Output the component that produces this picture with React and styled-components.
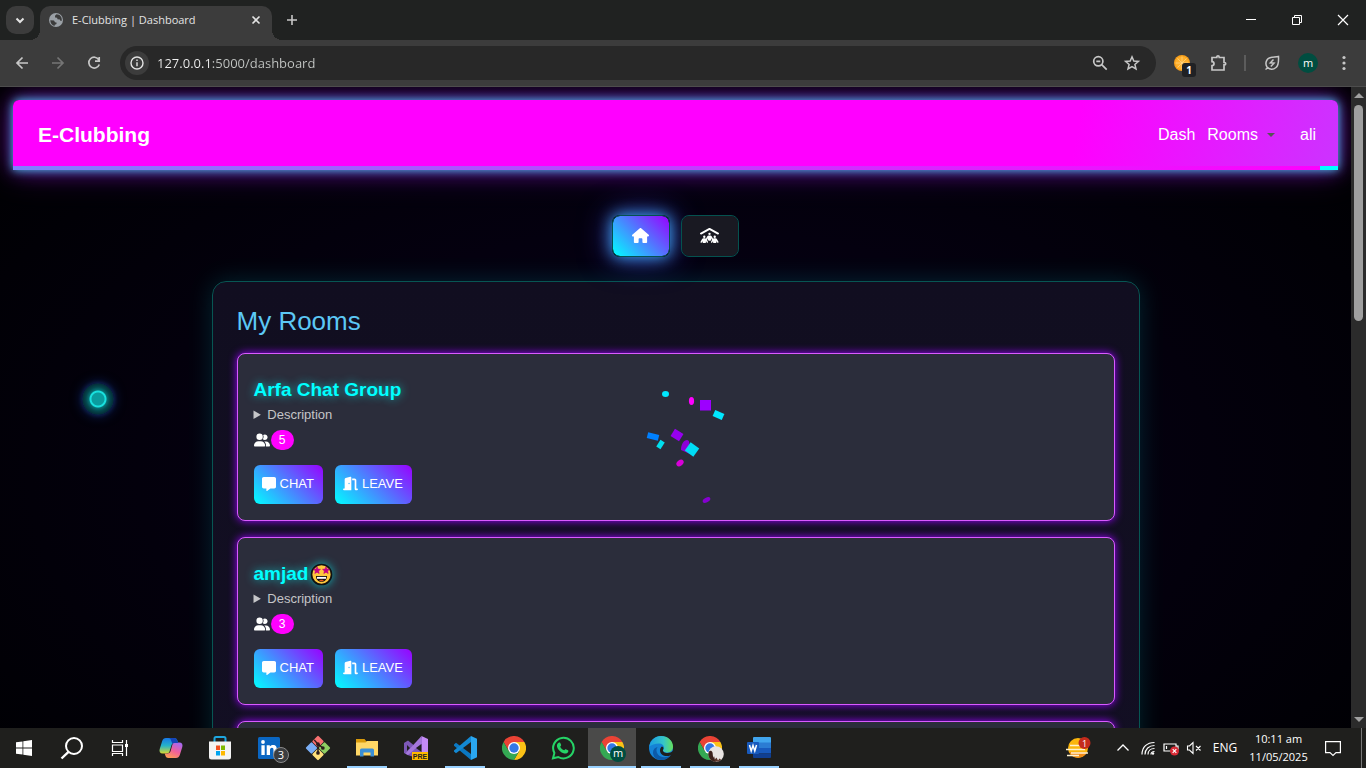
import React from "react";
import styled, { createGlobalStyle, css } from "styled-components";
import { FaHouse, FaPeopleRoof, FaUserGroup, FaMessage, FaDoorOpen } from "react-icons/fa6";

const GlobalStyle = createGlobalStyle`
  *, *::before, *::after { box-sizing: border-box; }
  body { margin: 0; background: #000; font-family: "Liberation Sans", Arial, sans-serif; }
  button, input { font: inherit; }
  h1, h2 { margin: 0; }
`;

const chromeFont = css`font-family: "Open Sans", "Noto Sans", sans-serif;`;

const Screen = styled.div`
  display: flex;
  flex-direction: column;
  height: 100vh;
  overflow: hidden;
`;

/* ---------- browser frame ---------- */

const TabStrip = styled.div`
  ${chromeFont}
  display: flex;
  flex: none;
  height: 40px;
  background: #202221;
`;

const IconButton = styled.button`
  display: flex;
  align-items: center;
  justify-content: center;
  flex: none;
  width: ${(p) => p.$w || 28}px;
  height: ${(p) => p.$h || 28}px;
  padding: 0;
  border: 0;
  border-radius: ${(p) => p.$radius || 0}px;
  background: ${(p) => p.$bg || "transparent"};
  color: ${(p) => p.$color || "#c7c7c7"};
  svg { display: block; overflow: visible; }
`;

const TabSearch = styled(IconButton)`
  margin: 6px 6px 0;
`;

const Tab = styled.div`
  position: relative;
  display: flex;
  align-items: center;
  width: 232px;
  height: 34px;
  margin-top: 6px;
  padding: 0 2px 6px 8px;
  border-radius: 10px 10px 0 0;
  background: #3c3c3c;
  color: #e3e3e3;
  font-size: 11px;
  line-height: 16px;
  &::before, &::after {
    content: "";
    position: absolute;
    bottom: 0;
    width: 10px;
    height: 10px;
  }
  &::before { left: -10px; background: radial-gradient(circle at 0 0, transparent 10px, #3c3c3c 10px); }
  &::after { right: -10px; background: radial-gradient(circle at 100% 0, transparent 10px, #3c3c3c 10px); }
`;

const TabTitle = styled.span`
  flex: 1;
  margin-left: 8px;
  white-space: nowrap;
`;

const NewTab = styled(IconButton)`
  margin: 6px auto 0 6px;
`;

const Toolbar = styled.div`
  ${chromeFont}
  display: flex;
  align-items: center;
  flex: none;
  gap: 8px;
  height: 47px;
  padding: 0 8px;
  border-bottom: 1px solid #4d4d4d;
  background: #3c3c3c;
`;

const AddressBar = styled.label`
  display: flex;
  align-items: center;
  flex: 1;
  height: 34px;
  margin: 0 4px;
  padding: 0 6px 0 5px;
  border-radius: 17px;
  background: #282828;
`;

const AddressInput = styled.input`
  flex: 1;
  min-width: 0;
  height: 24px;
  margin-left: 8px;
  padding: 0;
  border: 0;
  outline: 0;
  font-size: 13px;
  background: linear-gradient(90deg, #f1f1f1 54px, #c4c7c5 54px);
  background-clip: text;
  -webkit-text-fill-color: transparent;
`;

const ToolbarRule = styled.span`
  width: 2px;
  height: 16px;
  margin: 0 4px;
  background: #5c5c5c;
`;

const Avatar = styled.span`
  display: grid;
  place-items: center;
  width: 20px;
  height: 20px;
  border-radius: 50%;
  background: #004d40;
  color: #fff;
  font-size: 11px;
  line-height: 16px;
`;

const ExtensionBadge = styled.span`
  position: absolute;
  right: 0;
  bottom: 0;
  width: 14px;
  height: 14px;
  border-radius: 3px;
  background: #202124;
  color: #fff;
  font: bold 10px/14px "Open Sans", sans-serif;
`;

const ExtensionButton = styled(IconButton)`
  position: relative;
`;

/* ---------- web page ---------- */

const Viewport = styled.div`
  display: flex;
  flex: 1;
  min-height: 0;
`;

const Page = styled.div`
  position: relative;
  flex: 1;
  min-width: 0;
  overflow: hidden;
  background: radial-gradient(ellipse at 50% 60%, #06001a 0%, #04000f 45%, #000003 90%);
`;

const NavBar = styled.header`
  margin: 13px 13px 0;
  border-radius: 6px 6px 0 0;
  box-shadow: 0 0 10px #4cc9f0, 0 0 20px rgba(120, 40, 220, 0.6), 0 0 34px rgba(200, 0, 255, 0.35);
  color: #fff;
`;

const NavRow = styled.div`
  display: flex;
  align-items: center;
  height: 66px;
  padding: 0 22px 0 25px;
  border-radius: 6px 6px 0 0;
  background: linear-gradient(100deg, #ff00ff 80%, #cc33ff 100%);
`;

const Brand = styled.a`
  margin: 4px auto 0 0;
  color: #fff;
  font-size: 21px;
  font-weight: bold;
  line-height: 28px;
  text-decoration: none;
`;

const NavLinks = styled.nav`
  display: flex;
  align-items: center;
  gap: 12px;
  margin-top: 4px;
`;

const NavLink = styled.a`
  display: flex;
  align-items: center;
  gap: 9px;
  color: #fff;
  font-size: 16px;
  line-height: 24px;
  text-decoration: none;
`;

const Caret = styled.span`
  margin-right: 13px;
  border: 4px solid transparent;
  border-bottom: 0;
  border-top-color: #555;
`;

const NavProgress = styled.div`
  height: 4px;
  background: linear-gradient(90deg, #8080ff, #ff00ff calc(100% - 18px), #00ffff 0);
`;

const Switcher = styled.div`
  display: flex;
  justify-content: center;
  gap: 11px;
  margin: 45px 0 24px;
`;

const SwitchButton = styled.button`
  display: grid;
  place-items: center;
  width: 58px;
  height: 42px;
  padding: 0 2px 2px 0;
  border: 1px solid #04524f;
  border-radius: 8px;
  background: ${(p) => (p.$active ? "linear-gradient(45deg, #00ffff, #9900ff)" : "#191922")};
  background-clip: padding-box;
  box-shadow: ${(p) => (p.$active ? "0 0 16px #3fb4ff, 0 0 32px rgba(70, 60, 230, 0.7)" : "none")};
  color: #fff;
`;

const Panel = styled.main`
  max-width: 928px;
  margin: 0 auto;
  padding: 24px;
  border: 1px solid #075653;
  border-radius: 14px;
  background: linear-gradient(180deg, #110e20, #130f24);
  box-shadow: 0 0 24px rgba(0, 255, 255, 0.15);
`;

const PanelTitle = styled.h1`
  margin-bottom: 17px;
  color: #5cc8f5;
  font-size: 26px;
  font-weight: normal;
  line-height: 30px;
`;

const RoomList = styled.div`
  display: flex;
  flex-direction: column;
  gap: 16px;
`;

const RoomCard = styled.article`
  min-height: 168px;
  padding: 25px 16px 16px;
  border: 1px solid #d95bff;
  border-radius: 8px;
  background: #2b2d3b;
  box-shadow: 0 0 9px #9900ff;
`;

const RoomName = styled.h2`
  display: flex;
  align-items: center;
  gap: 2px;
  height: 22px;
  color: #00ffff;
  font-size: 19px;
  line-height: 22px;
  text-shadow: 0 0 10px rgba(0, 255, 255, 0.65);
  svg { filter: drop-shadow(0 0 5px rgba(0, 255, 255, 0.65)); }
`;

const Description = styled.details`
  margin: 4px 0 5px;
  color: #c5c5c8;
  font-size: 13px;
  line-height: 20px;
`;

const Members = styled.div`
  display: flex;
  align-items: center;
  gap: 1px;
  height: 20px;
  color: #fff;
`;

const Count = styled.span`
  width: 23px;
  border-radius: 10px;
  background: #ff00ff;
  font-size: 12px;
  line-height: 20px;
  text-align: center;
`;

const Actions = styled.div`
  display: flex;
  gap: 12px;
  margin-top: 15px;
`;

const ActionButton = styled.button`
  display: flex;
  align-items: center;
  gap: 4px;
  height: 39px;
  padding: 0 9px 2px 8px;
  border: 0;
  border-radius: 6px;
  background: linear-gradient(45deg, #00ffff, #9900ff);
  color: #fff;
  font-size: 13px;
  line-height: 20px;
`;

const Confetti = styled.svg`
  position: absolute;
  top: 283px;
  left: calc(50% - 76px);
  pointer-events: none;
`;

const PointerGlow = styled.span`
  position: absolute;
  top: 296px;
  left: 82px;
  width: 32px;
  height: 32px;
  border-radius: 50%;
  background: radial-gradient(circle, #0a9c9e 0 6px, #19e0de 7px, #19e0de 8px, #077074 9px, #04484e 12px, #04303a 15px, #0a2350 16px);
  box-shadow: 0 0 4px #102a60, 0 0 12px rgba(30, 80, 190, 0.5);
`;

const ScrollTrack = styled.div`
  display: flex;
  flex-direction: column;
  align-items: center;
  flex: none;
  width: 15px;
  padding: 6px 0;
  background: #2b2b2b;
`;

const ScrollArrow = styled.span`
  border: 5px solid transparent;
  ${(p) =>
    p.$down
      ? css`margin-top: auto; border-bottom: 0; border-top-color: #a0a0a0;`
      : css`border-top: 0; border-bottom-color: #a0a0a0;`}
`;

const ScrollThumb = styled.span`
  width: 9px;
  height: 216px;
  margin-top: 7px;
  border-radius: 5px;
  background: #9f9f9f;
`;

/* ---------- taskbar ---------- */

const Taskbar = styled.footer`
  ${chromeFont}
  display: flex;
  flex: none;
  height: 40px;
  background: #1f1f1d;
  color: #fff;
`;

const SystemButtons = styled.div`
  display: flex;
  margin-right: 3px;
`;

const Apps = styled.div`
  display: flex;
  gap: 1px;
`;

const TaskButton = styled.button`
  position: relative;
  display: grid;
  place-items: center;
  width: 48px;
  height: 40px;
  padding: 0;
  border: 0;
  background: ${(p) => (p.$active ? "#4a4a49" : "transparent")};
  svg { display: block; }
  ${(p) =>
    (p.$running || p.$active) &&
    css`
      &::after {
        content: "";
        position: absolute;
        bottom: 0;
        left: ${p.$active ? 0 : 4}px;
        right: ${p.$active ? 0 : 4}px;
        height: 2px;
        background: #99d1ff;
      }
    `}
`;

const TaskBadge = styled.span`
  position: absolute;
  right: ${(p) => p.$right}px;
  bottom: ${(p) => p.$bottom}px;
  width: 16px;
  height: 16px;
  border: ${(p) => (p.$ring ? "1px solid #8a8a8a" : "0")};
  border-radius: 50%;
  background: ${(p) => p.$bg};
  color: #fff;
  font-size: 11px;
  line-height: 14px;
  text-align: center;
`;

const Tray = styled.div`
  display: flex;
  align-items: center;
  margin-left: auto;
  padding-right: 4px;
`;

const TrayButton = styled(IconButton)`
  color: #fff;
`;

const Language = styled.button`
  width: 40px;
  padding: 0;
  border: 0;
  background: transparent;
  color: #fff;
  font-size: 12px;
  line-height: 18px;
`;

const Clock = styled.time`
  width: 67px;
  font-size: 11px;
  line-height: 18px;
  text-align: center;
  white-space: nowrap;
`;

const Notifications = styled(TrayButton)`
  padding-right: 8px;
  border-right: 1px solid #777;
`;

/* ---------- drawings ---------- */

const Line = ({ size = 16, w = 1.7, box = 16, children }) => (
  <svg width={size} height={size} viewBox={`0 0 ${box} ${box}`} fill="none" stroke="currentColor" strokeWidth={w} aria-hidden="true">
    {children}
  </svg>
);

const Globe = () => (
  <svg width="16" height="16" viewBox="0 0 16 16" aria-hidden="true">
    <circle cx="8" cy="8" r="7" fill="#9aa0a6" />
    <path d="M2.300 8.200 6 8.600l1 1.700 1.800.4-.6 1.600-1.500.5-.1 1.200C4 13.200 2.300 11 2.300 8.200zM8.500 2.200 7 3.800l.1 1.700 2 .2.400 1.600 2.300.2.800 1.400 1.200-.2C14.200 5 12 2.300 8.500 2.200z" fill="#3c3c3c" />
  </svg>
);

const Orange = () => (
  <svg width="18" height="18" viewBox="0 0 18 18" aria-hidden="true">
    <circle cx="9" cy="9" r="8" fill="#f9a01b" />
    <circle cx="9" cy="9" r="6.500" fill="#ffb02c" />
    <path d="M9 2.500v13M2.500 9h13M4.400 4.400l9.200 9.200M13.600 4.400l-9.200 9.200" stroke="#ffd88c" strokeWidth=".7" />
  </svg>
);

const StarEyes = () => (
  <svg width="23" height="23" viewBox="0 0 23 23" aria-label="star-struck" role="img">
    <circle cx="11.500" cy="11.500" r="10" fill="#ffc83d" stroke="#111" strokeWidth="1.700" />
    <path d="M7 3.800l1 2.300 2.500.2-1.900 1.700.6 2.500L7 9.200l-2.200 1.300.6-2.500-1.900-1.700L6 6.100zM16 3.800l1 2.300 2.500.2-1.900 1.700.6 2.500-2.200-1.300-2.200 1.300.6-2.500-1.900-1.700 2.500-.2z" fill="#c30083" stroke="#c30083" strokeWidth=".6" />
    <path d="M6 13h11c0 3.600-2.300 5.800-5.500 5.800S6 16.600 6 13z" fill="#111" />
    <path d="M7 13.900h9v1.900H7z" fill="#fff" />
    <path d="M9 17.600c1-1 4-1 5 0-1.200.8-3.800.8-5 0z" fill="#e8541e" />
  </svg>
);

const ChromeLogo = () => (
  <svg width="24" height="24" viewBox="0 0 24 24" aria-hidden="true">
    <path d="M17.200 15 12 24A12 12 0 0 0 22.400 6H12z" fill="#fbc116" />
    <path d="M1.600 6A12 12 0 0 1 22.400 6H12l-5.200 9z" fill="#ea4335" />
    <path d="M1.600 6 6.800 15 12 18l5.200-3L12 24A12 12 0 0 1 1.600 6z" fill="#34a853" />
    <circle cx="12" cy="12" r="6" fill="#fff" />
    <circle cx="12" cy="12" r="4.700" fill="#3478e5" />
  </svg>
);

const Windows = () => (
  <svg width="16" height="16" viewBox="0 0 16 16" fill="#fff" aria-hidden="true">
    <path d="M0 2.300 6.500 1.400v6.200H0zM7.300 1.300 16 0v7.600H7.300zM0 8.400h6.500v6.200L0 13.700zM7.300 8.400H16V16l-8.700-1.300z" />
  </svg>
);

const Search = () => (
  <svg width="24" height="24" viewBox="0 0 24 24" fill="none" stroke="#fff" strokeWidth="2" aria-hidden="true">
    <circle cx="14" cy="10" r="8" />
    <path d="M8.500 15.800 1.500 22.500" strokeWidth="2.400" />
  </svg>
);

const TaskView = () => (
  <svg width="18" height="18" viewBox="0 0 18 18" fill="none" stroke="#fff" strokeWidth="1.200" aria-hidden="true">
    <path d="M1.500 1v2.500h10V1M1.500 17v-2.500h10V17M1.500 6h10v6.500h-10zM15.500 1v16" />
    <path d="M14 5h3v3h-3z" fill="#fff" stroke="none" />
  </svg>
);

const Copilot = () => (
  <svg width="24" height="22" viewBox="0 0 24 22" aria-hidden="true">
    <defs>
      <linearGradient id="cpA" x1="0" y1="0" x2="0" y2="1">
        <stop offset="0" stopColor="#1778e8" /><stop offset=".5" stopColor="#26b4c8" /><stop offset="1" stopColor="#d8d930" />
      </linearGradient>
      <linearGradient id="cpB" x1="0.700" y1="0" x2="0.200" y2="1">
        <stop offset="0" stopColor="#a768f0" /><stop offset=".5" stopColor="#f0609a" /><stop offset="1" stopColor="#ffa050" />
      </linearGradient>
    </defs>
    <path d="M7 1h8c2 0 3 1.200 3.500 3l.6 2h-3.600c-2 0-2.700 1-3.200 2.700L10.700 14c-.6 1.800-1.500 2.500-3.200 2.500H3.700C1 16.500 0 14.500.7 12L3.200 4C3.900 2 5 1 7 1z" fill="url(#cpA)" />
    <path d="M17 21H9.500c-2 0-2.800-1.200-3.300-3l-.5-1.600h2.500c2 0 3-1 3.500-2.700L13.300 8c.6-1.800 1.500-2.500 3.200-2.500h3.800c2.700 0 3.700 2 3 4.500L20.800 18c-.7 2-1.800 3-3.800 3z" fill="url(#cpB)" />
    <path d="M15 1c2 0 3 1.200 3.500 3l.6 2h-3.600c-1 0-1.700.3-2.200.8L12 3.200C11.700 2 11 1 9.500 1z" fill="#1545b8" />
  </svg>
);

const Store = () => (
  <svg width="24" height="24" viewBox="0 0 24 24" aria-hidden="true">
    <path d="M6.500 6V2.500Q6.500 1 8 1h8q1.500 0 1.500 1.500V6" fill="none" stroke="#1ea7e0" strokeWidth="2" />
    <path d="M1 5.500h22V21q0 2.500-2.500 2.500h-17Q1 23.500 1 21z" fill="#f4f4f4" />
    <path d="M8 9.500h4V14H8z" fill="#f25022" /><path d="M13 9.500h4V14h-4z" fill="#7fba00" />
    <path d="M8 15h4v4.500H8z" fill="#00a4ef" /><path d="M13 15h4v4.500h-4z" fill="#ffb900" />
  </svg>
);

const LinkedIn = () => (
  <svg width="22" height="22" viewBox="0 0 22 22" aria-hidden="true">
    <rect width="22" height="22" rx="1.500" fill="#0a66c2" />
    <g fill="#fff">
      <circle cx="5" cy="5" r="1.900" />
      <path d="M3.400 8.300h3.300V18H3.400zM8.700 8.300h3.100v1.300c.6-1 1.700-1.600 3.200-1.600 3 0 3.800 1.800 3.800 4.700V18h-3.300v-4.700c0-1.300-.2-2.500-1.600-2.500S12 12 12 13.200V18H8.700z" />
    </g>
  </svg>
);

const Git = () => (
  <svg width="26" height="26" viewBox="0 0 24 24" aria-hidden="true">
    <g transform="rotate(45 12 12)">
      <rect x="3.800" y="3.800" width="7.900" height="7.900" rx="1" fill="#f87171" />
      <rect x="12.300" y="3.800" width="7.900" height="7.900" rx="1" fill="#8fce62" />
      <rect x="3.800" y="12.300" width="7.900" height="7.900" rx="1" fill="#7aaef5" />
      <rect x="12.300" y="12.300" width="7.900" height="7.900" rx="1" fill="#ffe07a" />
    </g>
    <path d="M8.500 4.500 12 8.500v8M12 8.500l4.500 3.500" stroke="#2b1d1a" strokeWidth="1.400" fill="none" />
    <g fill="#2b1d1a"><circle cx="12" cy="8.500" r="1.700" /><circle cx="16.500" cy="12" r="1.700" /><circle cx="12" cy="16.500" r="1.700" /></g>
  </svg>
);

const Explorer = () => (
  <svg width="22" height="20" viewBox="0 0 22 20" aria-hidden="true">
    <path d="M0 1h8.500l2 2.500H22V17H0z" fill="#d99a0b" />
    <path d="M0 4.500h9.500L11 3h11v14.500H0z" fill="#ffd766" />
    <path d="M4 18.500V12q0-1.500 1.500-1.500h11Q18 10.500 18 12v6.500h-3.500v-4h-7v4z" fill="#3b8fd6" />
  </svg>
);

const VisualStudio = () => (
  <svg width="24" height="24" viewBox="0 0 24 24" aria-hidden="true">
    <path d="M1.500 6 4 4.500l8 6.500 5.500-9.500L24 4v16.500l-6.500 3L3.500 19 0 17V7z" fill="#7d58b8" />
    <path d="M17.500 0 24 3v18l-6.500 3z" fill="#c48af5" />
    <path d="M17.500 0v7.500L4 19l-2.500-1.500z" fill="#a477db" />
    <path d="M3 9v6l3-3z" fill="#1f1f1d" /><path d="m12 12 5.500-4v8z" fill="#1f1f1d" />
    <rect x="8" y="16" width="16" height="8" fill="#ffb900" />
    <text x="16" y="22.700" textAnchor="middle" fontFamily="Liberation Sans, sans-serif" fontWeight="bold" fontSize="7" fill="#222">PRE</text>
  </svg>
);

const VSCode = () => (
  <svg width="24" height="24" viewBox="0 0 24 24" aria-hidden="true">
    <path d="m1 8.500 2-1.700L18 18v6L1 9.700z" fill="#0b78c2" />
    <path d="M18 0v6L3 17.300l-2-1.700v-1.200z" fill="#1389d3" />
    <path d="M18 0l6 2.800v18.400L18 24z" fill="#2aa7f0" />
  </svg>
);

const WhatsApp = () => (
  <svg width="24" height="24" viewBox="0 0 24 24" aria-hidden="true">
    <path d="M2 22.300 3.400 17A10.300 10.300 0 1 1 7.300 21z" fill="none" stroke="#25d366" strokeWidth="2" />
    <path d="M8 6.500c.5-.2 1-.2 1.300.4l.8 1.900c.2.500 0 .8-.9 1.900.9 1.700 2.200 2.800 4 3.600.8-.9 1-1.300 1.600-1.100l2.200 1c.5.3.4 1.400 0 2-.8 1.200-2.300 1.600-3.800 1.200-3.700-1-6.300-3.700-7.200-6.700-.3-1.500.3-3.500 2-4.200z" fill="#25d366" />
  </svg>
);

const Edge = () => (
  <svg width="24" height="24" viewBox="0 0 24 24" aria-hidden="true">
    <defs>
      <linearGradient id="edgeTop" x1="0" y1="0.500" x2="1" y2="0.500">
        <stop offset="0" stopColor="#1b9de2" /><stop offset=".6" stopColor="#35c5c8" /><stop offset="1" stopColor="#66e05a" />
      </linearGradient>
    </defs>
    <circle cx="12" cy="12" r="12" fill="#1583d6" />
    <path d="M.3 10.500C1.300 4.300 6 0 12 0c7 0 12 5 12 10.500 0 4-3 6-6 6-2.500 0-4-1-4-2s1-1.500 1-3c0-2-2-4-5-4-4 0-8 1.500-9.700 3z" fill="url(#edgeTop)" />
    <path d="M8.500 11c-1.500 2-1.500 5 .5 7.500 3 3.500 8.500 3.500 13 .5-2 3-6 5-10 5-5 0-8-3.500-8-7.500 0-3 2-5 4.500-5.500z" fill="#0c5aa8" />
    <path d="M13 10.500c1.500.5 2 1.500 1 3.500-.6 1.500 1.500 3 4.500 3 2 0 4-.8 5.500-2v3l-2.300 1.200c-5 2.300-10.700-.2-10.700-4.700 0-2 1-3.500 2-4z" fill="#1f1f1d" />
  </svg>
);

const ProfilePhoto = () => (
  <svg width="16" height="16" viewBox="0 0 16 16" aria-hidden="true">
    <circle cx="8" cy="8" r="7.800" fill="#e8e4e2" />
    <path d="M1 5.500C2 4 4 4.500 4.500 6.500c.5 2 0 3 1 4.500s1.500 3 2.500 4.800C4 16 .5 13 .2 8z" fill="#3c211b" />
    <path d="m6 10 1.500 3 1-1.500 1.500 3 1.500-2 1.500 1-2 2H7z" fill="#5a3329" />
  </svg>
);

const Word = () => (
  <svg width="24" height="22" viewBox="0 0 24 22" aria-hidden="true">
    <path d="M6 1q0-1 1-1h16q1 0 1 1v5H6z" fill="#41a5ee" /><path d="M6 5.500h18V11H6z" fill="#2b7cd3" />
    <path d="M6 11h18v5.500H6z" fill="#185abd" /><path d="M6 16.500h18V20q0 1-1 1H7q-1 0-1-1z" fill="#103f91" />
    <rect y="5" width="12" height="12" rx="1" fill="#185abd" />
    <path d="m2.500 8 1.700 6L6 8.500 7.800 14l1.700-6" fill="none" stroke="#fff" strokeWidth="1.500" />
  </svg>
);

const Weather = () => (
  <svg width="25" height="22" viewBox="0 0 25 22" aria-hidden="true">
    <circle cx="12" cy="11" r="10" fill="#fbb60d" />
    <path d="M3 15a10 10 0 0 0 18 0z" fill="#f08a18" />
    <path d="M4 8.500h15M0 12.500h19M5 16h17M1 18.500h12" stroke="#fff2cf" strokeWidth="1.600" />
    <circle cx="18.500" cy="6" r="6" fill="#c42b1c" />
    <text x="18.500" y="9.500" textAnchor="middle" fontFamily="Open Sans, sans-serif" fontSize="9" fill="#fff">1</text>
  </svg>
);

const apps = [
  { name: "Copilot", icon: <Copilot /> },
  { name: "Microsoft Store", icon: <Store /> },
  { name: "LinkedIn", icon: <LinkedIn />, badge: <TaskBadge $right={4} $bottom={5} $bg="#3b3d40" $ring>3</TaskBadge> },
  { name: "Git", icon: <Git /> },
  { name: "File Explorer", icon: <Explorer />, running: true },
  { name: "Visual Studio", icon: <VisualStudio /> },
  { name: "Visual Studio Code", icon: <VSCode />, running: true },
  { name: "Chrome", icon: <ChromeLogo /> },
  { name: "WhatsApp", icon: <WhatsApp /> },
  { name: "Chrome, m", icon: <ChromeLogo />, active: true, badge: <TaskBadge $right={10} $bottom={6} $bg="#004d40">m</TaskBadge> },
  { name: "Edge", icon: <Edge />, running: true },
  { name: "Chrome, second profile", icon: <ChromeLogo />, running: true, badge: <TaskBadge $right={10} $bottom={6} $bg="transparent"><ProfilePhoto /></TaskBadge> },
  { name: "Word", icon: <Word />, running: true },
];

const rooms = [
  { name: "Arfa Chat Group", count: 5 },
  { name: "amjad", emoji: <StarEyes />, count: 3 },
];

function Room({ name, emoji, count }) {
  return (
    <RoomCard>
      <RoomName>{name}{emoji}</RoomName>
      <Description><summary>Description</summary></Description>
      <Members><FaUserGroup size={16} /><Count>{count}</Count></Members>
      <Actions>
        <ActionButton><FaMessage size={14} />CHAT</ActionButton>
        <ActionButton><FaDoorOpen size={15} />LEAVE</ActionButton>
      </Actions>
    </RoomCard>
  );
}

export default function App() {
  return (
    <Screen>
      <GlobalStyle />
      <TabStrip>
        <TabSearch $bg="#3c3c3c" $radius={10} $color="#e3e3e3" aria-label="Search tabs">
          <Line size={10} box={10} w={2}><path d="m1.500 3.500 3.500 3.500 3.500-3.500" /></Line>
        </TabSearch>
        <Tab>
          <Globe />
          <TabTitle>E-Clubbing | Dashboard</TabTitle>
          <IconButton $color="#e3e3e3" aria-label="Close tab">
            <Line size={8} box={8} w={1.6}><path d="m.5.5 7 7m0-7-7 7" /></Line>
          </IconButton>
        </Tab>
        <NewTab aria-label="New tab"><Line size={10} box={10} w={1.6}><path d="M5 0v10M0 5h10" /></Line></NewTab>
        <IconButton $w={46} $h={40} $color="#fff" aria-label="Minimize"><Line size={10} box={10} w={1}><path d="M0 4.500h10" /></Line></IconButton>
        <IconButton $w={46} $h={40} $color="#fff" aria-label="Restore"><Line size={10} box={10} w={1}><path d="M.5 2.500h7v7h-7zM2.500 2.500v-2h7v7h-2" /></Line></IconButton>
        <IconButton $w={46} $h={40} $color="#fff" aria-label="Close"><Line size={10} box={10} w={1.2}><path d="m0 0 10 10M10 0 0 10" /></Line></IconButton>
      </TabStrip>

      <Toolbar>
        <IconButton aria-label="Back"><Line><path d="M14 8H3m5.500-5.500L3 8l5.500 5.500" /></Line></IconButton>
        <IconButton $color="#757575" aria-label="Forward"><Line><path d="M2 8h11M7.500 2.500 13 8l-5.500 5.500" /></Line></IconButton>
        <IconButton aria-label="Reload"><Line><path d="M12.800 4.700A5.400 5.400 0 1 0 13.300 9.500M13.200 2v4.200H9" /></Line></IconButton>
        <AddressBar>
          <IconButton as="span" $w={24} $h={24} $radius={12} $bg="#3c3c3c" $color="#e3e3e3">
            <Line size={14} box={14} w={1.4}><circle cx="7" cy="7" r="6" /><path d="M7 6.200v4M7 3.500V5" /></Line>
          </IconButton>
          <AddressInput aria-label="Address" defaultValue="127.0.0.1:5000/dashboard" />
          <IconButton aria-label="Zoom"><Line><circle cx="6.300" cy="6.300" r="4.600" /><path d="m9.700 9.700 5 5M4.300 6.300h4" /></Line></IconButton>
          <IconButton $w={36} aria-label="Bookmark"><Line w={1.5}><path d="m8 1.800 1.800 4.200 4.600.4-3.500 3 1.100 4.500L8 11.500l-4 2.400 1.100-4.500-3.500-3L6.200 6z" /></Line></IconButton>
        </AddressBar>
        <ExtensionButton aria-label="Extension"><Orange /><ExtensionBadge>1</ExtensionBadge></ExtensionButton>
        <IconButton aria-label="Extensions">
          <Line size={18} box={18} w={1.7}><path d="M3 3.500h4.800V3a1.200 1.200 0 0 1 2.400 0v.5H15v5h.5a1.200 1.200 0 0 1 0 2.400H15V16H3v-4.300q2-.2 2-2t-2-2z" /></Line>
        </IconButton>
        <ToolbarRule />
        <IconButton aria-label="Performance">
          <Line w={1.5}><path d="M1.500 14.500 4 12.700M3 12C.8 8.500 2 3 8 2.300 10.500 2 12.500 2 14.500 1.500c.3 5.500-.2 9-2.500 11-2.500 2.200-6 2.300-9-.5z" /><path d="M9.500 4.500 6.300 7.800l3.700.4-3.200 3.300" /></Line>
        </IconButton>
        <IconButton aria-label="Profile"><Avatar>m</Avatar></IconButton>
        <IconButton aria-label="Menu">
          <svg width="4" height="16" viewBox="0 0 4 16" fill="currentColor"><circle cx="2" cy="2.500" r="1.600" /><circle cx="2" cy="8" r="1.600" /><circle cx="2" cy="13.500" r="1.600" /></svg>
        </IconButton>
      </Toolbar>

      <Viewport>
        <Page>
          <NavBar>
            <NavRow>
              <Brand href="#">E-Clubbing</Brand>
              <NavLinks>
                <NavLink href="#">Dash</NavLink>
                <NavLink href="#">Rooms<Caret /></NavLink>
                <NavLink href="#">ali</NavLink>
              </NavLinks>
            </NavRow>
            <NavProgress />
          </NavBar>
          <Switcher>
            <SwitchButton $active aria-label="Home"><FaHouse size={17} /></SwitchButton>
            <SwitchButton aria-label="Rooms"><FaPeopleRoof size={19} /></SwitchButton>
          </Switcher>
          <Panel>
            <PanelTitle>My Rooms</PanelTitle>
            <RoomList>
              {rooms.map((room) => <Room key={room.name} {...room} />)}
              <RoomCard />
            </RoomList>
          </Panel>
          <Confetti width="160" height="150" viewBox="0 0 160 150" aria-hidden="true">
            <ellipse cx="65.500" cy="24" rx="3.500" ry="3" fill="#00e8ff" />
            <ellipse cx="91.500" cy="31" rx="2.600" ry="4" fill="#ff00ff" />
            <rect x="100" y="30" width="11" height="10.500" fill="#9d00ff" />
            <rect x="-5" y="-3.300" width="10" height="6.600" fill="#00e8ff" transform="translate(118.500 45) rotate(24)" />
            <rect x="-5.700" y="-3" width="11.400" height="6" fill="#0080ff" transform="translate(53 66.500) rotate(14)" />
            <rect x="-2.500" y="-4" width="5" height="8" fill="#00dfee" transform="translate(60.500 74.500) rotate(32)" />
            <rect x="-5" y="-4.200" width="10" height="8.400" fill="#9600f0" transform="translate(77 65) rotate(32)" />
            <path d="M81 80c0-6 3-10 6-10 2 0 3 3 2 6l1 8z" fill="#8c00d8" />
            <rect x="-5.300" y="-5" width="10.600" height="10" fill="#00dcf5" transform="translate(92 79.500) rotate(36)" />
            <ellipse cx="80" cy="93" rx="4" ry="2.800" fill="#d800d8" transform="rotate(-38 80 93)" />
            <ellipse cx="106.500" cy="130" rx="4.200" ry="2.200" fill="#8500d0" transform="rotate(-30 106.500 130)" />
          </Confetti>
          <PointerGlow />
        </Page>
        <ScrollTrack>
          <ScrollArrow />
          <ScrollThumb />
          <ScrollArrow $down />
        </ScrollTrack>
      </Viewport>

      <Taskbar>
        <SystemButtons>
          <TaskButton aria-label="Start"><Windows /></TaskButton>
          <TaskButton aria-label="Search"><Search /></TaskButton>
          <TaskButton aria-label="Task view"><TaskView /></TaskButton>
        </SystemButtons>
        <Apps>
          {apps.map((a) => (
            <TaskButton key={a.name} aria-label={a.name} $running={a.running} $active={a.active}>{a.icon}{a.badge}</TaskButton>
          ))}
        </Apps>
        <Tray>
          <TrayButton $w={64} $h={36} aria-label="Weather"><Weather /></TrayButton>
          <TrayButton $w={26} $h={40} aria-label="Show hidden icons"><Line size={12} box={12} w={1.3}><path d="m.5 8.500 5.500-5.500 5.500 5.500" /></Line></TrayButton>
          <TrayButton $w={23} $h={40} aria-label="Network">
            <Line size={14} box={14} w={1.200}><path d="M1 13.500C1 6 6 1.500 13.500 1.500M4 13.500c0-5.500 4-9 9.500-9M7 13.500c0-3.500 2.500-6 6.500-6M10 13.500c0-2 1.500-3 3.500-3" /><circle cx="12" cy="12.500" r="1.200" fill="currentColor" stroke="none" /></Line>
          </TrayButton>
          <TrayButton $w={23} $h={40} aria-label="Battery">
            <Line size={16} box={16} w={1.200}><path d="M1 4h12v7H1zM13 6h2v3h-2M3.500 6v3" /><circle cx="11.500" cy="11" r="4.500" fill="#d92b36" stroke="none" /><path d="m9.700 9.200 3.600 3.600m0-3.600-3.600 3.600" /></Line>
          </TrayButton>
          <TrayButton $w={23} $h={40} aria-label="Volume muted">
            <Line size={14} box={14} w={1.100}><path d="M.5 5h2l3.500-3.500v11L2.500 9h-2zM9 5l4.500 4.500M13.500 5 9 9.500" /></Line>
          </TrayButton>
          <Language>ENG</Language>
          <Clock>10:11 am<br />11/05/2025</Clock>
          <Notifications $w={50} $h={40} aria-label="Notifications">
            <Line size={16} box={16} w={1.200}><path d="M.6 1.600h14.800v11H11L8 15.400 5 12.600H.6z" /></Line>
          </Notifications>
        </Tray>
      </Taskbar>
    </Screen>
  );
}
